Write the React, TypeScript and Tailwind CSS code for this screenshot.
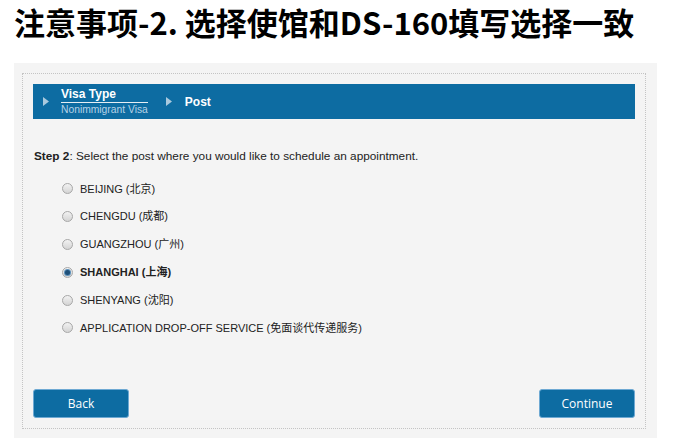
const posts = [
  { label: "BEIJING (北京)" },
  { label: "CHENGDU (成都)" },
  { label: "GUANGZHOU (广州)" },
  { label: "SHANGHAI (上海)", selected: true },
  { label: "SHENYANG (沈阳)" },
  { label: "APPLICATION DROP-OFF SERVICE (免面谈代传递服务)" },
];

function Arrow() {
  return (
    <svg width="6" height="9" viewBox="0 0 6 9" className="shrink-0">
      <path d="M0 0 L6 4.5 L0 9 Z" fill="#a9c9de" />
    </svg>
  );
}

function Radio({ checked }: { checked?: boolean }) {
  return (
    <span className="relative flex h-[11px] w-[11px] shrink-0 items-center justify-center rounded-full border border-[#a7a7a7] bg-gradient-to-b from-[#f2f2f2] to-[#d4d4d4]">
      {checked && <span className="h-[5px] w-[5px] rounded-full bg-[#1d4f78] shadow-[0_0_0_1px_#5b90bb]" />}
    </span>
  );
}

export default function App() {
  return (
    <div className="flex h-[438px] w-[679px] flex-col overflow-hidden bg-white">
      <div className="h-[63px] shrink-0 pl-[14px]">
        <h1
          className="whitespace-nowrap text-[31px] font-bold leading-[44px] text-black"
          style={{ fontFamily: '"Noto Sans CJK SC", "Noto Sans", sans-serif' }}
        >
          注意事项-2. 选择使馆和DS-160填写选择一致
        </h1>
      </div>

      <div className="ml-[14px] flex w-[643px] flex-1 flex-col bg-[#f4f4f4] pb-[9px] pl-[8px] pr-[11px] pt-[10px]">
        <div
          className="flex flex-1 flex-col border border-dotted border-[#c4c4c4] px-[10px] pb-[10px] pt-[10px]"
          style={{ fontFamily: '"Liberation Sans", Arial, "Noto Sans CJK SC", sans-serif' }}
        >
          {/* breadcrumb bar */}
          <div className="flex h-[35px] items-center bg-[#0d6ca2] pl-[10px]">
            <Arrow />
            <div className="ml-[12px] flex flex-col">
              <span className="border-b border-[#e6eef4] pb-[1px] text-[12px] font-bold leading-[13px] text-white">Visa Type</span>
              <span className="pt-[1px] text-[10.3px] leading-[11px] text-[#b5d2e6]">Nonimmigrant Visa</span>
            </div>
            <span className="ml-[18px]">
              <Arrow />
            </span>
            <span className="ml-[13px] text-[12px] font-bold text-white">Post</span>
          </div>

          <p className="ml-px mt-[30px] text-[11.8px] leading-[14px] text-[#222]">
            <span className="font-bold">Step 2</span>: Select the post where you would like to schedule an appointment.
          </p>

          <ul className="mt-[12px] flex flex-col pl-[29px]">
            {posts.map((p) => (
              <li key={p.label} className="flex h-[27.8px] items-center gap-[7px]">
                <Radio checked={p.selected} />
                <span className={`text-[11px] text-[#222] ${p.selected ? "font-bold" : ""}`}>{p.label}</span>
              </li>
            ))}
          </ul>

          <div className="mt-auto flex justify-between">
            {["Back", "Continue"].map((t) => (
              <button
                key={t}
                className="h-[29px] w-[96px] rounded-[3px] border border-[#6ea9d3] bg-[#0d6ca2] text-[12px] text-white"
                style={{ fontFamily: '"Open Sans", sans-serif' }}
              >
                {t}
              </button>
            ))}
          </div>
        </div>
      </div>
    </div>
  );
}
